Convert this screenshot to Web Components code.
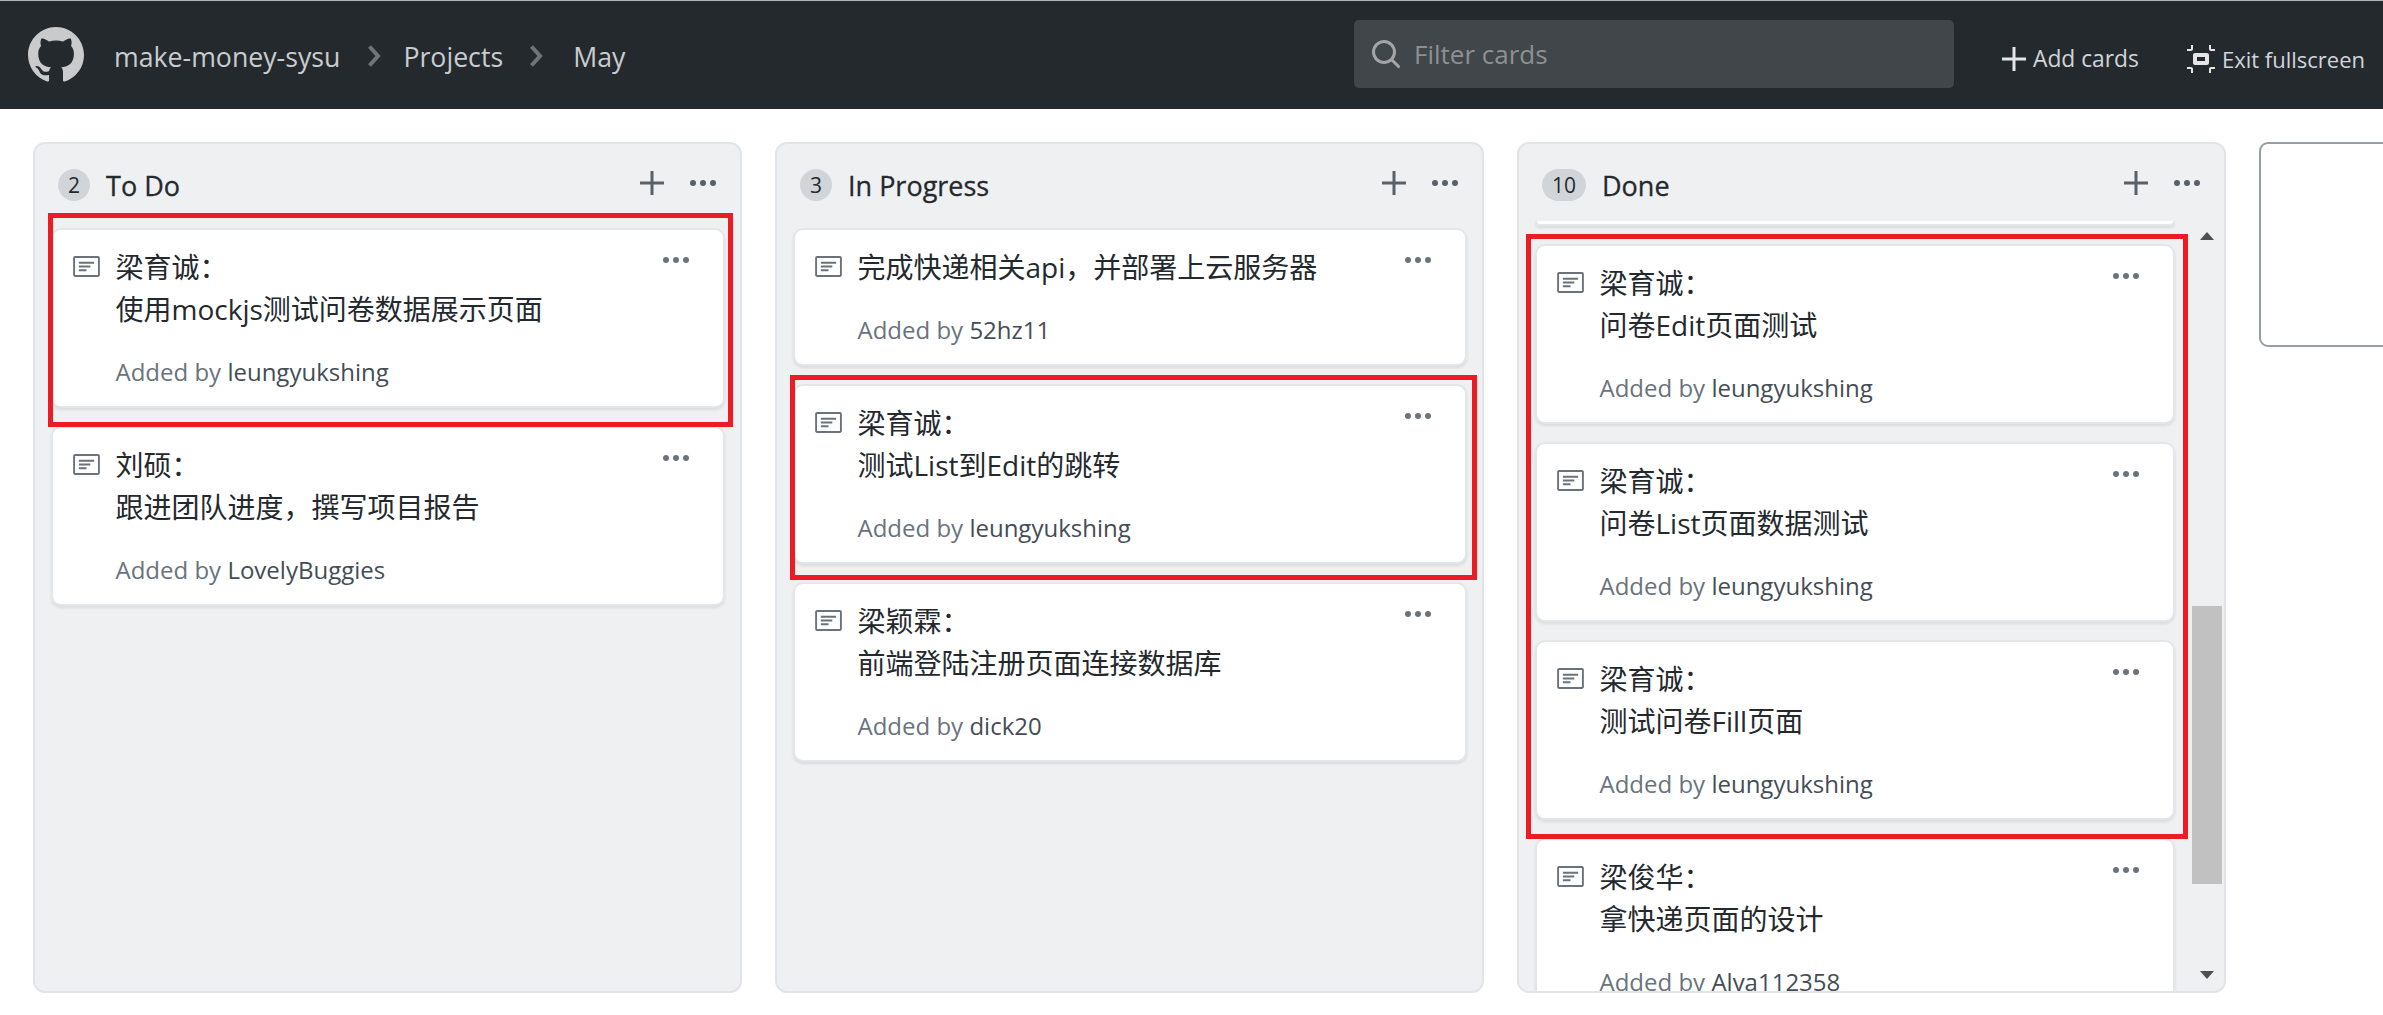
<!DOCTYPE html>
<html lang="zh">
<head>
<meta charset="utf-8">
<title>May</title>
<style>
  html, body { margin: 0; height: 100%; overflow: hidden; background: #fff; }
  body { font-family: "Open Sans", "Noto Sans CJK SC", sans-serif; color: #24292e; }
</style>
</head>
<body>
<project-page>
  <project-header slot="header"></project-header>

  <project-column name="To Do" count="2">
    <red-mark style="--t:15px;--r:8px;--b:19px;--l:3px">
      <note-card by="leungyukshing"><span>梁育诚：</span><span>使用mockjs测试问卷数据展示页面</span></note-card>
    </red-mark>
    <note-card by="LovelyBuggies"><span>刘硕：</span><span>跟进团队进度，撰写项目报告</span></note-card>
  </project-column>

  <project-column name="In Progress" count="3">
    <note-card by="52hz11"><span>完成快递相关api，并部署上云服务器</span></note-card>
    <red-mark style="--t:9px;--r:10px;--b:16px;--l:3px">
      <note-card by="leungyukshing"><span>梁育诚：</span><span>测试List到Edit的跳转</span></note-card>
    </red-mark>
    <note-card by="dick20"><span>梁颖霖：</span><span>前端登陆注册页面连接数据库</span></note-card>
  </project-column>

  <project-column name="Done" count="10" scrolled>
    <note-card sliver></note-card>
    <red-mark style="--t:10px;--r:13px;--b:19px;--l:9px">
      <note-card by="leungyukshing"><span>梁育诚：</span><span>问卷Edit页面测试</span></note-card>
      <note-card by="leungyukshing"><span>梁育诚：</span><span>问卷List页面数据测试</span></note-card>
      <note-card by="leungyukshing"><span>梁育诚：</span><span>测试问卷Fill页面</span></note-card>
    </red-mark>
    <note-card by="Alva112358"><span>梁俊华：</span><span>拿快递页面的设计</span></note-card>
  </project-column>

  <add-column></add-column>
</project-page>

<script>
// octicons, 16 grid unless the viewBox says otherwise
const kebab = `<svg width="26" height="6" viewBox="0 0 26 6" fill="currentColor" style="display:block"><circle cx="3" cy="3" r="3"/><circle cx="13" cy="3" r="3"/><circle cx="23" cy="3" r="3"/></svg>`
const plus = `<svg width="24" height="24" viewBox="0 0 24 24" fill="currentColor" style="display:block"><path d="M10.500 0h3v10.500H24v3H13.500V24h-3V13.500H0v-3h10.500z"/></svg>`
const chevron = `<svg width="14" height="22" viewBox="0 0 14 22" fill="none" stroke="#6f7479" stroke-width="4"><path d="M2.500 1.500 11 11l-8.500 9.500"/></svg>`

class ProjectPage extends HTMLElement {
  constructor() {
    super()
    this.attachShadow({mode: 'open'}).innerHTML = `
      <style>
        :host { display: block; height: 1015px; overflow: hidden; }
        .board { display: flex; align-items: flex-start; gap: 33px; padding: 33px 0 0 33px; }
      </style>
      <slot name="header"></slot>
      <div class="board"><slot></slot></div>`
  }
}

class ProjectHeader extends HTMLElement {
  constructor() {
    super()
    this.attachShadow({mode: 'open'}).innerHTML = `
      <style>
        :host { display: flex; align-items: center; box-sizing: border-box; height: 109px; padding: 0 18px 0 28px;
          background: #24292e; border-top: 1px solid #b4b4b4; color: #c9cccf; }
        .crumbs { flex: 1; display: flex; align-items: center; font-size: 26.700px; padding-top: 2px; }
        .logo { margin-right: 30px; margin-top: -2px; display: block; }
        .crumbs svg.sep { margin: 0 22px 0 27px; }
        .crumbs svg.sep-b { margin: 0 30px 0 26px; }
        .search { box-sizing: border-box; width: 600px; height: 68px; margin-top: -2px; display: flex; align-items: center; gap: 12px;
          padding-left: 16px; background: #41464a; border-radius: 5px; color: #8d9092; font-size: 26px; }
        .search svg { color: #a3a5a7; }
        .actions { display: flex; align-items: center; margin-left: 48px; font-size: 22px; color: #d1d5da; padding-top: 7px; }
        .actions span { display: flex; align-items: center; gap: 7px; }
        .actions span:first-child { font-size: 22.800px; }
        .actions span + span { margin-left: 48px; }
        .actions svg { color: #e3e5e7; }
      </style>
      <div class="crumbs">
        <svg class="logo" width="56" height="56" viewBox="0 0 16 16" fill="#c9cacc"><path d="M8 0C3.58 0 0 3.58 0 8c0 3.54 2.29 6.53 5.47 7.59.4.07.55-.17.55-.38 0-.19-.01-.82-.01-1.490-2.010.37-2.530-.49-2.690-.94-.09-.23-.48-.94-.82-1.130-.28-.15-.68-.52-.01-.53.63-.01 1.080.58 1.230.82.72 1.210 1.870.87 2.330.66.07-.52.28-.87.51-1.070-1.780-.2-3.640-.89-3.640-3.950 0-.87.31-1.590.82-2.150-.08-.2-.36-1.020.08-2.120 0 0 .67-.21 2.200.82.64-.18 1.320-.27 2-.27.68 0 1.360.09 2 .27 1.530-1.040 2.200-.82 2.200-.82.44 1.100.16 1.920.08 2.120.51.56.82 1.270.82 2.150 0 3.070-1.870 3.750-3.650 3.950.29.25.54.73.54 1.480 0 1.070-.01 1.930-.01 2.200 0 .21.15.46.55.38A8.013 8.013 0 0016 8c0-4.420-3.580-8-8-8z"/></svg>
        <span>make-money-sysu</span>
        ${chevron.replace('<svg', '<svg class="sep"')}
        <span>Projects</span>
        ${chevron.replace('<svg', '<svg class="sep sep-b"')}
        <span>May</span>
      </div>
      <div class="search">
        <svg width="32" height="32" viewBox="0 0 16 16" fill="currentColor"><path fill-rule="evenodd" d="M11.500 7a4.499 4.499 0 11-8.998 0A4.499 4.499 0 0111.500 7zm-.82 4.740a6 6 0 111.060-1.060l3.040 3.040a.75.75 0 11-1.060 1.060l-3.040-3.040z"/></svg>
        <span>Filter cards</span>
      </div>
      <div class="actions">
        <span>${plus}Add cards</span>
        <span><svg width="28" height="28" viewBox="0 1 14 14" fill="currentColor"><path fill-rule="evenodd" d="M2 4H0V3h2V1h1v2c0 .547-.453 1-1 1zm0 8H0v1h2v2h1v-2c0-.547-.453-1-1-1zm9-2c0 .547-.453 1-1 1H4c-.547 0-1-.453-1-1V6c0-.547.453-1 1-1h6c.547 0 1 .453 1 1v4zM9 7H5v2h4V7zm2 6v2h1v-2h2v-1h-2c-.547 0-1 .453-1 1zm1-10V1h-1v2c0 .547.453 1 1 1h2V3h-2z"/></svg>Exit fullscreen</span>
      </div>`
  }
}

class ProjectColumn extends HTMLElement {
  constructor() {
    super()
    let scrolled = this.hasAttribute('scrolled')
    this.attachShadow({mode: 'open'}).innerHTML = `
      <style>
        :host { flex: none; display: flex; flex-direction: column; box-sizing: border-box; width: 709px; height: 851px;
          background: #eff0f2; border: 2px solid #e1e4e8; border-radius: 12px; overflow: hidden; }
        .head { flex: none; box-sizing: border-box; height: 77px; display: flex; align-items: center; padding: 5px 24px 0 23px; }
        .count { box-sizing: border-box; min-width: 32px; height: 32px; padding: 0 10px; border-radius: 16px; margin-right: 16px;
          background: #d1d5da; color: #24292e; font-size: 21px; line-height: 32px; text-align: center; }
        .name { flex: 1; font-size: 27px; font-weight: 500; -webkit-text-stroke: .3px #24292e; color: #24292e; }
        .head span.add, .head span.more { display: block; margin-top: -5px; color: #586069; }
        .head .add { margin-right: 26px; }
        .body { flex: 1; min-height: 0; display: flex; }
        .list { flex: 1; min-width: 0; display: flex; flex-direction: column; gap: 18px;
          padding: 7px 15px 0 16px; }
        :host([scrolled]) .list { padding: 0 17px 0 16px; overflow: hidden; }
        .bar { flex: none; position: relative; width: 30px; margin-right: 2px; }
        .thumb { margin-top: 385px; height: 278px; background: #c1c1c1; }
        .up, .down { position: absolute; left: 8px; width: 0; height: 0; border: 8px solid transparent; border-left-width: 7px; border-right-width: 7px; }
        .up { top: 3px; border-bottom-color: #505050; }
        .down { bottom: 4px; border-top-color: #505050; }
      </style>
      <div class="head">
        <span class="count">${this.getAttribute('count')}</span>
        <span class="name">${this.getAttribute('name')}</span>
        <span class="add">${plus}</span>
        <span class="more">${kebab}</span>
      </div>
      <div class="body">
        <div class="list"><slot></slot></div>
        ${scrolled ? '<div class="bar"><div class="up"></div><div class="thumb"></div><div class="down"></div></div>' : ''}
      </div>`
  }
}

// a hand-drawn red rectangle over one or more cards, each one is a bit off
class RedMark extends HTMLElement {
  constructor() {
    super()
    this.attachShadow({mode: 'open'}).innerHTML = `
      <style>
        :host { flex: none; position: relative; display: flex; flex-direction: column; gap: 18px; }
        .frame { position: absolute; z-index: 1; pointer-events: none; border: 5px solid #ed1c24;
          top: calc(var(--t) * -1); right: calc(var(--r) * -1); bottom: calc(var(--b) * -1); left: calc(var(--l) * -1); }
      </style>
      <slot></slot>
      <div class="frame"></div>`
  }
}

class NoteCard extends HTMLElement {
  constructor() {
    super()
    let sliver = this.hasAttribute('sliver')
    this.attachShadow({mode: 'open'}).innerHTML = `
      <style>
        :host { flex: none; display: block; box-sizing: border-box; background: #fff; border: 2px solid #e4e6ea; border-radius: 10px;
          box-shadow: 0 2px 3px rgba(0,0,0,.09); }
        :host([sliver]) { height: 5px; border-top: 0; border-radius: 0 0 10px 10px; }
        .card { display: grid; grid-template-columns: 43px 1fr 26px; padding: 16px 34px 18px 19.500px; }
        .icon { display: block; margin-top: 10px; color: #6a737d; }
        .text { font-size: 28px; line-height: 42px; color: #24292e; display: flex; flex-direction: column; }
        ::slotted(span) { display: block; }
        .dots { display: block; margin-top: 11px; color: #6a737d; }
        .by { grid-column: 2; margin-top: 26px; font-size: 24px; line-height: 32px; color: #6a737d; }
        .by b { font-weight: 400; color: #444d56; }
      </style>
      ${sliver ? '' : `<div class="card">
        <svg class="icon" width="27" height="21" viewBox="0 2 14 11" fill="currentColor"><path d="M3 10h4V9H3v1zm0-2h6V7H3v1zm0-2h8V5H3v1zm10 6H1V3h12v9zM1 2c-.55 0-1 .45-1 1v9c0 .55.45 1 1 1h12c.55 0 1-.45 1-1V3c0-.55-.45-1-1-1H1z"/></svg>
        <div class="text"><slot></slot></div>
        <span class="dots">${kebab}</span>
        <div class="by">Added by <b>${this.getAttribute('by')}</b></div>
      </div>`}`
  }
}

class AddColumn extends HTMLElement {
  constructor() {
    super()
    this.attachShadow({mode: 'open'}).innerHTML = `
      <style>
        :host { flex: none; display: block; box-sizing: border-box; width: 200px; height: 205px; background: #fff;
          border: 2px solid #959da5; border-radius: 9px; }
      </style>`
  }
}

customElements.define('project-page', ProjectPage)
customElements.define('project-header', ProjectHeader)
customElements.define('project-column', ProjectColumn)
customElements.define('red-mark', RedMark)
customElements.define('note-card', NoteCard)
customElements.define('add-column', AddColumn)
</script>
</body>
</html>
